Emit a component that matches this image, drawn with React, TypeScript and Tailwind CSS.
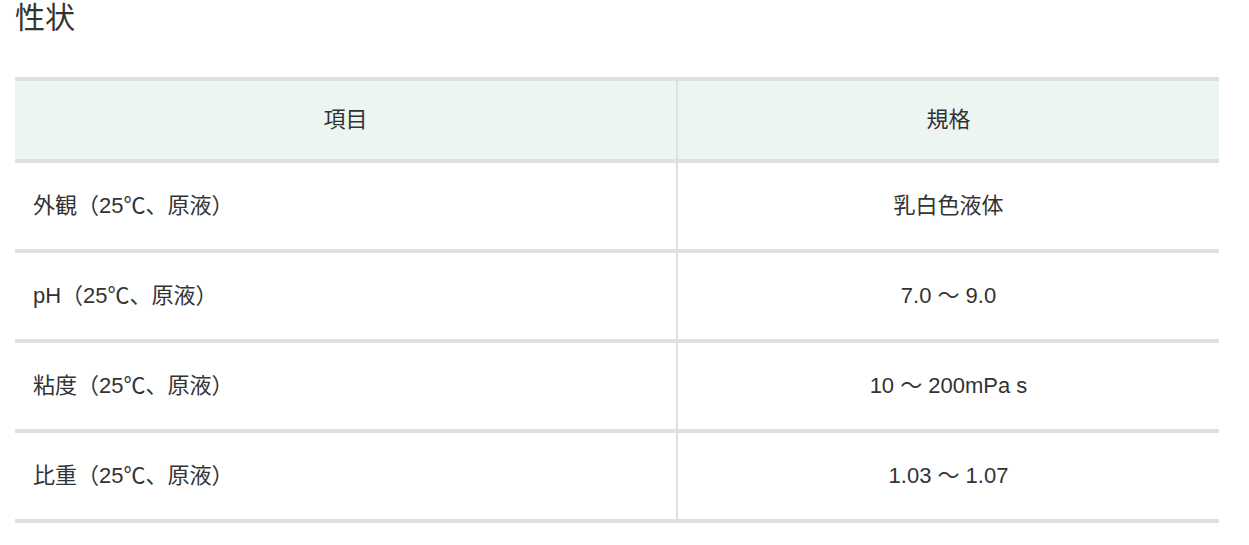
const rows: [string, string][] = [
  ["外観（25℃、原液）", "乳白色液体"],
  ["pH（25℃、原液）", "7.0 ～ 9.0"],
  ["粘度（25℃、原液）", "10 ～ 200mPa s"],
  ["比重（25℃、原液）", "1.03 ～ 1.07"],
];

export default function App() {
  return (
    <div className="min-h-screen bg-white pl-[15px] text-[#333] font-['Liberation_Sans','Noto_Sans_CJK_JP',sans-serif]">
      <h2 className="mt-[2px] text-[30px] leading-[32px] font-normal">性状</h2>

      <table className="mt-[43px] w-[1204px] border-separate border-spacing-0 text-[22px]">
        <thead>
          <tr className="bg-[#edf5f2]">
            <th className="w-[663px] border-t-4 border-b-4 border-r-2 border-[#dde0e4] py-[24px] text-center font-normal leading-[30px]">
              項目
            </th>
            <th className="border-t-4 border-b-4 border-[#dde0e4] py-[24px] text-center font-normal leading-[30px]">
              規格
            </th>
          </tr>
        </thead>
        <tbody>
          {rows.map(([item, spec]) => (
            <tr key={item}>
              <td className="border-b-4 border-r-2 border-[#dde0e4] px-[18px] py-[28px] text-left leading-[30px]">
                {item}
              </td>
              <td className="border-b-4 border-[#dde0e4] py-[28px] text-center leading-[30px]">
                {spec}
              </td>
            </tr>
          ))}
        </tbody>
      </table>
    </div>
  );
}
